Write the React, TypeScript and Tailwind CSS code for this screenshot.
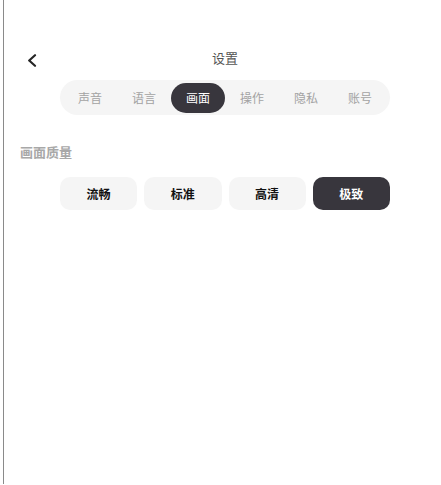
import React from "react";

const tabs = ["声音", "语言", "画面", "操作", "隐私", "账号"];
const qualities = ["流畅", "标准", "高清", "极致"];

export default function App() {
  const font = { fontFamily: '"Noto Sans CJK SC", "Noto Sans", sans-serif' };
  return (
    <div className="w-[441px] h-[485px] overflow-hidden bg-white flex" style={font}>
      <div className="ml-[3px] w-px h-[484px] bg-[#8a8a8a] shrink-0" />
      <div className="w-[442px] shrink-0 flex flex-col">
        <div className="mt-[36px] h-[44px] grid grid-cols-[1fr_auto_1fr] items-center">
          <div className="pl-[23px] pt-[5px] flex items-center">
            <svg width="10" height="13" viewBox="0 0 10 13" fill="none">
              <path d="M8 1.2L2.2 6.5L8 11.8" stroke="#262626" strokeWidth="2.2" strokeLinecap="round" strokeLinejoin="round" />
            </svg>
          </div>
          <div className="text-[13px] leading-[16px] text-[#555]">设置</div>
          <div />
        </div>
        <div className="mx-auto w-[330px] h-[35px] rounded-full bg-[#f5f5f5] px-[3px] flex items-center">
          {tabs.map((t) => (
            <div
              key={t}
              className={
                t === "画面"
                  ? "flex-1 h-[30px] rounded-full bg-[#38363d] text-white text-[12px] flex items-center justify-center"
                  : "flex-1 h-[30px] rounded-full text-[#a3a3a3] text-[12px] flex items-center justify-center"
              }
            >
              {t}
            </div>
          ))}
        </div>
        <div className="mt-[29px] pl-[16px] text-[13px] leading-[16px] font-bold text-[#a8a8a8]">画面质量</div>
        <div className="mt-[17px] mx-auto w-[330px] grid grid-cols-4 gap-[7px]">
          {qualities.map((q) => (
            <div
              key={q}
              className={
                q === "极致"
                  ? "h-[33px] rounded-[10px] bg-[#38363d] text-white text-[12px] font-bold flex items-center justify-center"
                  : "h-[33px] rounded-[10px] bg-[#f5f5f5] text-[#111] text-[12px] font-bold flex items-center justify-center"
              }
            >
              {q}
            </div>
          ))}
        </div>
      </div>
    </div>
  );
}
